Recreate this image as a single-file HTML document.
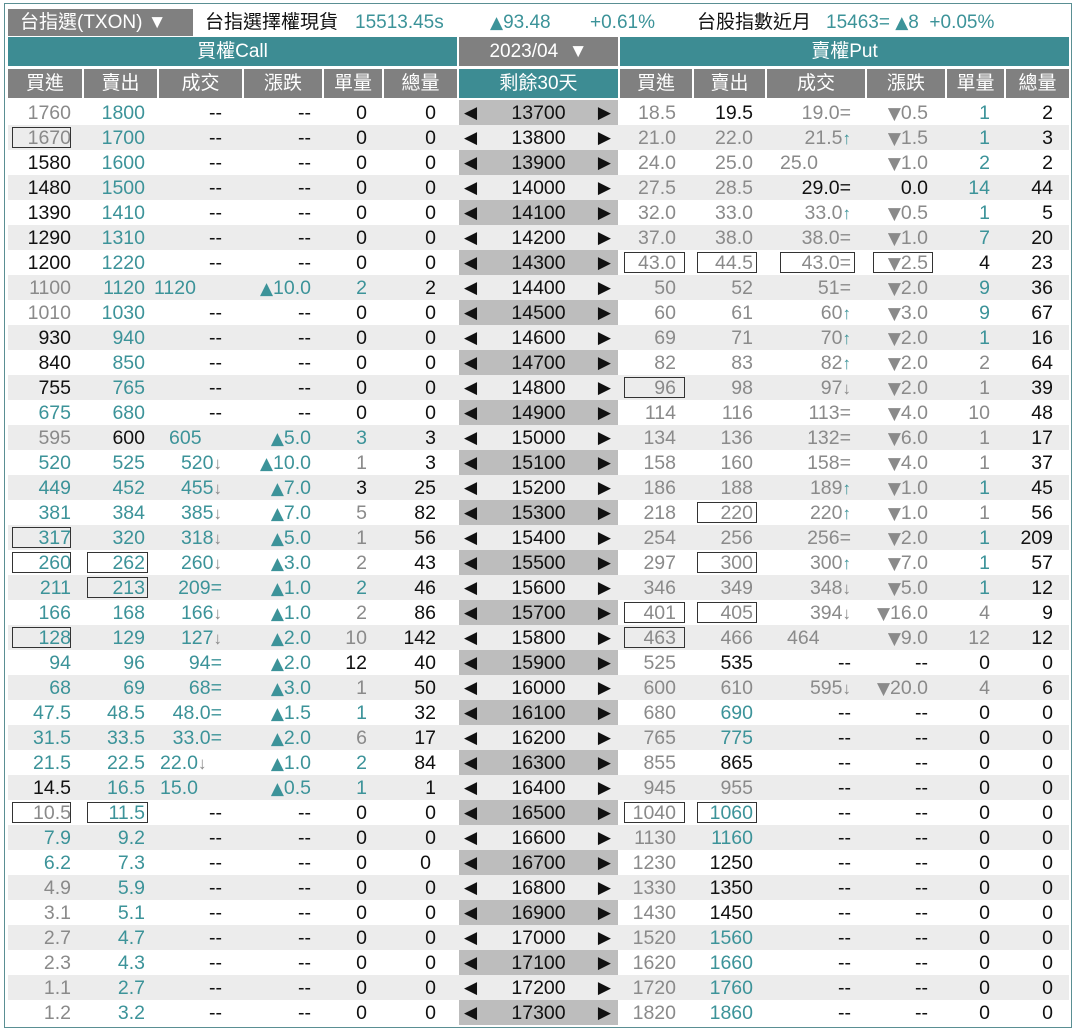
<!DOCTYPE html>
<html><head><meta charset="utf-8">
<style>
*{margin:0;padding:0;box-sizing:border-box}
body{width:1077px;height:1032px;background:#fff;position:relative;overflow:hidden;font-family:"Liberation Sans","Noto Sans CJK TC",sans-serif;font-size:19.5px;color:#111}
.frame{position:absolute;left:4px;top:3px;width:1068px;height:1025px;border:1px solid #5a8f93}
.tt{position:absolute;top:9px;height:27px;line-height:27px;white-space:nowrap;font-size:19px}
.hd{position:absolute;height:29px;line-height:29px;color:#fff;text-align:center;font-size:19px}
.ch{position:absolute;top:69px;height:29px;line-height:29px;background:#808080;color:#fff;text-align:center;font-size:19px}
.r{position:absolute;left:8px;width:1061px;height:25px;line-height:27px;margin-top:1px}
.r.o{background:#ececec}
.r span{position:absolute;top:0;height:25px;white-space:nowrap;text-align:right}
.c1{left:0;width:74px;padding-right:11px}
.c2{left:76px;width:73px;padding-right:12px}
.c3{left:151px;width:83px;padding-right:20px}
.c4{left:236px;width:78px;padding-right:11px}
.c5{left:316px;width:58px;padding-right:15px}
.c6{left:376px;width:73px;padding-right:21px}
.st{left:451px;width:159px;text-align:center!important;color:#111}
.st.d{background:#bdbdbd}
.st b{position:absolute;top:0;font-weight:normal;font-size:17px;font-family:"DejaVu Sans",sans-serif}
.st b.l{left:5px}.st b.rr{right:7px}
.p1{left:612px;width:72px;padding-right:16px}
.p2{left:686px;width:71px;padding-right:12px}
.p3{left:759px;width:98px;padding-right:14px}
.p4{left:859px;width:78px;padding-right:17px}
.p5{left:939px;width:57px;padding-right:14px}
.p6{left:998px;width:63px;padding-right:16px}
.L{text-align:left!important}
.t{color:#3c9399}.g{color:#8a8a8a}.n{color:#111}
.r span.bx{border:1px solid #333;top:2px;height:21px;padding:0}
.r span.u{position:static;color:#3c9399;font-size:17px;font-weight:bold}
.r span.dn{position:static;color:#8a8a8a;font-size:17px;font-weight:bold}
.tri{font-family:"DejaVu Sans",sans-serif;font-size:17px}
.r span.tri{position:static}
</style></head><body>
<div class="frame"></div>
<div class="tt" style="left:8px;width:185px;background:#808080;color:#fff;padding-left:12px">台指選(TXON) ▼</div>
<div class="tt" style="left:205px">台指選擇權現貨</div>
<div class="tt t" style="left:355px">15513.45s</div>
<div class="tt t" style="left:490px"><span class="tri">▲</span>93.48</div>
<div class="tt t" style="left:590px">+0.61%</div>
<div class="tt" style="left:697px">台股指數近月</div>
<div class="tt t" style="left:826px">15463= <span class="tri">▲</span>8&nbsp; +0.05%</div>

<div class="hd" style="top:37px;left:8px;width:449px;background:#3d8c93">買權Call</div>
<div class="hd" style="top:37px;left:459px;width:159px;background:#808080">2023/04 &nbsp;▼</div>
<div class="hd" style="top:37px;left:620px;width:449px;background:#3d8c93">賣權Put</div>

<div class="ch" style="left:8px;width:74px">買進</div>
<div class="ch" style="left:84px;width:73px">賣出</div>
<div class="ch" style="left:159px;width:83px">成交</div>
<div class="ch" style="left:244px;width:78px">漲跌</div>
<div class="ch" style="left:324px;width:58px">單量</div>
<div class="ch" style="left:384px;width:73px">總量</div>
<div class="ch" style="left:459px;width:159px;background:#3d8c93">剩餘30天</div>
<div class="ch" style="left:620px;width:72px">買進</div>
<div class="ch" style="left:694px;width:71px">賣出</div>
<div class="ch" style="left:767px;width:98px">成交</div>
<div class="ch" style="left:867px;width:78px">漲跌</div>
<div class="ch" style="left:947px;width:57px">單量</div>
<div class="ch" style="left:1006px;width:63px">總量</div>

<div class="r" style="top:99px"><span class="c1 g">1760</span><span class="c2 t">1800</span><span class="c3 n">--</span><span class="c4 n">--</span><span class="c5 n">0</span><span class="c6 n">0</span><span class="st d"><b class="l">◀</b>13700<b class="rr">▶</b></span><span class="p1 g">18.5</span><span class="p2 n">19.5</span><span class="p3 g">19.0=</span><span class="p4 g"><span class="tri">▼</span>0.5</span><span class="p5 t">1</span><span class="p6 n">2</span></div>
<div class="r o" style="top:124px"><span class="c1 g">1670</span><span class="bx" style="left:4px;width:59px"></span><span class="c2 t">1700</span><span class="c3 n">--</span><span class="c4 n">--</span><span class="c5 n">0</span><span class="c6 n">0</span><span class="st"><b class="l">◀</b>13800<b class="rr">▶</b></span><span class="p1 g">21.0</span><span class="p2 g">22.0</span><span class="p3 g">21.5<span class="u">↑</span></span><span class="p4 g"><span class="tri">▼</span>1.5</span><span class="p5 t">1</span><span class="p6 n">3</span></div>
<div class="r" style="top:149px"><span class="c1 n">1580</span><span class="c2 t">1600</span><span class="c3 n">--</span><span class="c4 n">--</span><span class="c5 n">0</span><span class="c6 n">0</span><span class="st d"><b class="l">◀</b>13900<b class="rr">▶</b></span><span class="p1 g">24.0</span><span class="p2 g">25.0</span><span class="p3 g L" style="padding-left:13px">25.0</span><span class="p4 g"><span class="tri">▼</span>1.0</span><span class="p5 t">2</span><span class="p6 n">2</span></div>
<div class="r o" style="top:174px"><span class="c1 n">1480</span><span class="c2 t">1500</span><span class="c3 n">--</span><span class="c4 n">--</span><span class="c5 n">0</span><span class="c6 n">0</span><span class="st"><b class="l">◀</b>14000<b class="rr">▶</b></span><span class="p1 g">27.5</span><span class="p2 g">28.5</span><span class="p3 n">29.0=</span><span class="p4 n">0.0</span><span class="p5 t">14</span><span class="p6 n">44</span></div>
<div class="r" style="top:199px"><span class="c1 n">1390</span><span class="c2 t">1410</span><span class="c3 n">--</span><span class="c4 n">--</span><span class="c5 n">0</span><span class="c6 n">0</span><span class="st d"><b class="l">◀</b>14100<b class="rr">▶</b></span><span class="p1 g">32.0</span><span class="p2 g">33.0</span><span class="p3 g">33.0<span class="u">↑</span></span><span class="p4 g"><span class="tri">▼</span>0.5</span><span class="p5 t">1</span><span class="p6 n">5</span></div>
<div class="r o" style="top:224px"><span class="c1 n">1290</span><span class="c2 t">1310</span><span class="c3 n">--</span><span class="c4 n">--</span><span class="c5 n">0</span><span class="c6 n">0</span><span class="st"><b class="l">◀</b>14200<b class="rr">▶</b></span><span class="p1 g">37.0</span><span class="p2 g">38.0</span><span class="p3 g">38.0=</span><span class="p4 g"><span class="tri">▼</span>1.0</span><span class="p5 t">7</span><span class="p6 n">20</span></div>
<div class="r" style="top:249px"><span class="c1 n">1200</span><span class="c2 t">1220</span><span class="c3 n">--</span><span class="c4 n">--</span><span class="c5 n">0</span><span class="c6 n">0</span><span class="st d"><b class="l">◀</b>14300<b class="rr">▶</b></span><span class="p1 g">43.0</span><span class="bx" style="left:616px;width:61px"></span><span class="p2 g">44.5</span><span class="bx" style="left:689px;width:60px"></span><span class="p3 g">43.0=</span><span class="bx" style="left:772px;width:75px"></span><span class="p4 g"><span class="tri">▼</span>2.5</span><span class="bx" style="left:865px;width:60px"></span><span class="p5 n">4</span><span class="p6 n">23</span></div>
<div class="r o" style="top:274px"><span class="c1 g">1100</span><span class="c2 t">1120</span><span class="c3 t L" style="left:146px">1120</span><span class="c4 t"><span class="tri">▲</span>10.0</span><span class="c5 t">2</span><span class="c6 n">2</span><span class="st"><b class="l">◀</b>14400<b class="rr">▶</b></span><span class="p1 g">50</span><span class="p2 g">52</span><span class="p3 g">51=</span><span class="p4 g"><span class="tri">▼</span>2.0</span><span class="p5 t">9</span><span class="p6 n">36</span></div>
<div class="r" style="top:299px"><span class="c1 g">1010</span><span class="c2 t">1030</span><span class="c3 n">--</span><span class="c4 n">--</span><span class="c5 n">0</span><span class="c6 n">0</span><span class="st d"><b class="l">◀</b>14500<b class="rr">▶</b></span><span class="p1 g">60</span><span class="p2 g">61</span><span class="p3 g">60<span class="u">↑</span></span><span class="p4 g"><span class="tri">▼</span>3.0</span><span class="p5 t">9</span><span class="p6 n">67</span></div>
<div class="r o" style="top:324px"><span class="c1 n">930</span><span class="c2 t">940</span><span class="c3 n">--</span><span class="c4 n">--</span><span class="c5 n">0</span><span class="c6 n">0</span><span class="st"><b class="l">◀</b>14600<b class="rr">▶</b></span><span class="p1 g">69</span><span class="p2 g">71</span><span class="p3 g">70<span class="u">↑</span></span><span class="p4 g"><span class="tri">▼</span>2.0</span><span class="p5 t">1</span><span class="p6 n">16</span></div>
<div class="r" style="top:349px"><span class="c1 n">840</span><span class="c2 t">850</span><span class="c3 n">--</span><span class="c4 n">--</span><span class="c5 n">0</span><span class="c6 n">0</span><span class="st d"><b class="l">◀</b>14700<b class="rr">▶</b></span><span class="p1 g">82</span><span class="p2 g">83</span><span class="p3 g">82<span class="u">↑</span></span><span class="p4 g"><span class="tri">▼</span>2.0</span><span class="p5 g">2</span><span class="p6 n">64</span></div>
<div class="r o" style="top:374px"><span class="c1 n">755</span><span class="c2 t">765</span><span class="c3 n">--</span><span class="c4 n">--</span><span class="c5 n">0</span><span class="c6 n">0</span><span class="st"><b class="l">◀</b>14800<b class="rr">▶</b></span><span class="p1 g">96</span><span class="bx" style="left:616px;width:61px"></span><span class="p2 g">98</span><span class="p3 g">97<span class="dn">↓</span></span><span class="p4 g"><span class="tri">▼</span>2.0</span><span class="p5 g">1</span><span class="p6 n">39</span></div>
<div class="r" style="top:399px"><span class="c1 t">675</span><span class="c2 t">680</span><span class="c3 n">--</span><span class="c4 n">--</span><span class="c5 n">0</span><span class="c6 n">0</span><span class="st d"><b class="l">◀</b>14900<b class="rr">▶</b></span><span class="p1 g">114</span><span class="p2 g">116</span><span class="p3 g">113=</span><span class="p4 g"><span class="tri">▼</span>4.0</span><span class="p5 g">10</span><span class="p6 n">48</span></div>
<div class="r o" style="top:424px"><span class="c1 g">595</span><span class="c2 n">600</span><span class="c3 t L" style="padding-left:10px">605</span><span class="c4 t"><span class="tri">▲</span>5.0</span><span class="c5 t">3</span><span class="c6 n">3</span><span class="st"><b class="l">◀</b>15000<b class="rr">▶</b></span><span class="p1 g">134</span><span class="p2 g">136</span><span class="p3 g">132=</span><span class="p4 g"><span class="tri">▼</span>6.0</span><span class="p5 g">1</span><span class="p6 n">17</span></div>
<div class="r" style="top:449px"><span class="c1 t">520</span><span class="c2 t">525</span><span class="c3 t">520<span class="dn">↓</span></span><span class="c4 t"><span class="tri">▲</span>10.0</span><span class="c5 g">1</span><span class="c6 n">3</span><span class="st d"><b class="l">◀</b>15100<b class="rr">▶</b></span><span class="p1 g">158</span><span class="p2 g">160</span><span class="p3 g">158=</span><span class="p4 g"><span class="tri">▼</span>4.0</span><span class="p5 g">1</span><span class="p6 n">37</span></div>
<div class="r o" style="top:474px"><span class="c1 t">449</span><span class="c2 t">452</span><span class="c3 t">455<span class="dn">↓</span></span><span class="c4 t"><span class="tri">▲</span>7.0</span><span class="c5 n">3</span><span class="c6 n">25</span><span class="st"><b class="l">◀</b>15200<b class="rr">▶</b></span><span class="p1 g">186</span><span class="p2 g">188</span><span class="p3 g">189<span class="u">↑</span></span><span class="p4 g"><span class="tri">▼</span>1.0</span><span class="p5 t">1</span><span class="p6 n">45</span></div>
<div class="r" style="top:499px"><span class="c1 t">381</span><span class="c2 t">384</span><span class="c3 t">385<span class="dn">↓</span></span><span class="c4 t"><span class="tri">▲</span>7.0</span><span class="c5 g">5</span><span class="c6 n">82</span><span class="st d"><b class="l">◀</b>15300<b class="rr">▶</b></span><span class="p1 g">218</span><span class="p2 g">220</span><span class="bx" style="left:689px;width:60px"></span><span class="p3 g">220<span class="u">↑</span></span><span class="p4 g"><span class="tri">▼</span>1.0</span><span class="p5 g">1</span><span class="p6 n">56</span></div>
<div class="r o" style="top:524px"><span class="c1 t">317</span><span class="bx" style="left:4px;width:59px"></span><span class="c2 t">320</span><span class="c3 t">318<span class="dn">↓</span></span><span class="c4 t"><span class="tri">▲</span>5.0</span><span class="c5 g">1</span><span class="c6 n">56</span><span class="st"><b class="l">◀</b>15400<b class="rr">▶</b></span><span class="p1 g">254</span><span class="p2 g">256</span><span class="p3 g">256=</span><span class="p4 g"><span class="tri">▼</span>2.0</span><span class="p5 t">1</span><span class="p6 n">209</span></div>
<div class="r" style="top:549px"><span class="c1 t">260</span><span class="bx" style="left:4px;width:59px"></span><span class="c2 t">262</span><span class="bx" style="left:79px;width:61px"></span><span class="c3 t">260<span class="dn">↓</span></span><span class="c4 t"><span class="tri">▲</span>3.0</span><span class="c5 g">2</span><span class="c6 n">43</span><span class="st d"><b class="l">◀</b>15500<b class="rr">▶</b></span><span class="p1 g">297</span><span class="p2 g">300</span><span class="bx" style="left:689px;width:60px"></span><span class="p3 g">300<span class="u">↑</span></span><span class="p4 g"><span class="tri">▼</span>7.0</span><span class="p5 t">1</span><span class="p6 n">57</span></div>
<div class="r o" style="top:574px"><span class="c1 t">211</span><span class="c2 t">213</span><span class="bx" style="left:79px;width:61px"></span><span class="c3 t">209=</span><span class="c4 t"><span class="tri">▲</span>1.0</span><span class="c5 t">2</span><span class="c6 n">46</span><span class="st"><b class="l">◀</b>15600<b class="rr">▶</b></span><span class="p1 g">346</span><span class="p2 g">349</span><span class="p3 g">348<span class="dn">↓</span></span><span class="p4 g"><span class="tri">▼</span>5.0</span><span class="p5 t">1</span><span class="p6 n">12</span></div>
<div class="r" style="top:599px"><span class="c1 t">166</span><span class="c2 t">168</span><span class="c3 t">166<span class="dn">↓</span></span><span class="c4 t"><span class="tri">▲</span>1.0</span><span class="c5 g">2</span><span class="c6 n">86</span><span class="st d"><b class="l">◀</b>15700<b class="rr">▶</b></span><span class="p1 g">401</span><span class="bx" style="left:616px;width:61px"></span><span class="p2 g">405</span><span class="bx" style="left:689px;width:60px"></span><span class="p3 g">394<span class="dn">↓</span></span><span class="p4 g"><span class="tri">▼</span>16.0</span><span class="p5 g">4</span><span class="p6 n">9</span></div>
<div class="r o" style="top:624px"><span class="c1 t">128</span><span class="bx" style="left:4px;width:59px"></span><span class="c2 t">129</span><span class="c3 t">127<span class="dn">↓</span></span><span class="c4 t"><span class="tri">▲</span>2.0</span><span class="c5 g">10</span><span class="c6 n">142</span><span class="st"><b class="l">◀</b>15800<b class="rr">▶</b></span><span class="p1 g">463</span><span class="bx" style="left:616px;width:61px"></span><span class="p2 g">466</span><span class="p3 g L" style="padding-left:20px">464</span><span class="p4 g"><span class="tri">▼</span>9.0</span><span class="p5 g">12</span><span class="p6 n">12</span></div>
<div class="r" style="top:649px"><span class="c1 t">94</span><span class="c2 t">96</span><span class="c3 t">94=</span><span class="c4 t"><span class="tri">▲</span>2.0</span><span class="c5 n">12</span><span class="c6 n">40</span><span class="st d"><b class="l">◀</b>15900<b class="rr">▶</b></span><span class="p1 g">525</span><span class="p2 n">535</span><span class="p3 n">--</span><span class="p4 n">--</span><span class="p5 n">0</span><span class="p6 n">0</span></div>
<div class="r o" style="top:674px"><span class="c1 t">68</span><span class="c2 t">69</span><span class="c3 t">68=</span><span class="c4 t"><span class="tri">▲</span>3.0</span><span class="c5 g">1</span><span class="c6 n">50</span><span class="st"><b class="l">◀</b>16000<b class="rr">▶</b></span><span class="p1 g">600</span><span class="p2 g">610</span><span class="p3 g">595<span class="dn">↓</span></span><span class="p4 g"><span class="tri">▼</span>20.0</span><span class="p5 g">4</span><span class="p6 n">6</span></div>
<div class="r" style="top:699px"><span class="c1 t">47.5</span><span class="c2 t">48.5</span><span class="c3 t">48.0=</span><span class="c4 t"><span class="tri">▲</span>1.5</span><span class="c5 t">1</span><span class="c6 n">32</span><span class="st d"><b class="l">◀</b>16100<b class="rr">▶</b></span><span class="p1 g">680</span><span class="p2 t">690</span><span class="p3 n">--</span><span class="p4 n">--</span><span class="p5 n">0</span><span class="p6 n">0</span></div>
<div class="r o" style="top:724px"><span class="c1 t">31.5</span><span class="c2 t">33.5</span><span class="c3 t">33.0=</span><span class="c4 t"><span class="tri">▲</span>2.0</span><span class="c5 g">6</span><span class="c6 n">17</span><span class="st"><b class="l">◀</b>16200<b class="rr">▶</b></span><span class="p1 g">765</span><span class="p2 t">775</span><span class="p3 n">--</span><span class="p4 n">--</span><span class="p5 n">0</span><span class="p6 n">0</span></div>
<div class="r" style="top:749px"><span class="c1 t">21.5</span><span class="c2 t">22.5</span><span class="c3 t L" style="padding-left:1px">22.0<span class="dn">↓</span></span><span class="c4 t"><span class="tri">▲</span>1.0</span><span class="c5 t">2</span><span class="c6 n">84</span><span class="st d"><b class="l">◀</b>16300<b class="rr">▶</b></span><span class="p1 g">855</span><span class="p2 n">865</span><span class="p3 n">--</span><span class="p4 n">--</span><span class="p5 n">0</span><span class="p6 n">0</span></div>
<div class="r o" style="top:774px"><span class="c1 n">14.5</span><span class="c2 t">16.5</span><span class="c3 t L" style="padding-left:1px">15.0</span><span class="c4 t"><span class="tri">▲</span>0.5</span><span class="c5 t">1</span><span class="c6 n">1</span><span class="st"><b class="l">◀</b>16400<b class="rr">▶</b></span><span class="p1 g">945</span><span class="p2 g">955</span><span class="p3 n">--</span><span class="p4 n">--</span><span class="p5 n">0</span><span class="p6 n">0</span></div>
<div class="r" style="top:799px"><span class="c1 g">10.5</span><span class="bx" style="left:4px;width:59px"></span><span class="c2 t">11.5</span><span class="bx" style="left:79px;width:61px"></span><span class="c3 n">--</span><span class="c4 n">--</span><span class="c5 n">0</span><span class="c6 n">0</span><span class="st d"><b class="l">◀</b>16500<b class="rr">▶</b></span><span class="p1 g">1040</span><span class="bx" style="left:616px;width:61px"></span><span class="p2 t">1060</span><span class="bx" style="left:689px;width:60px"></span><span class="p3 n">--</span><span class="p4 n">--</span><span class="p5 n">0</span><span class="p6 n">0</span></div>
<div class="r o" style="top:824px"><span class="c1 t">7.9</span><span class="c2 t">9.2</span><span class="c3 n">--</span><span class="c4 n">--</span><span class="c5 n">0</span><span class="c6 n">0</span><span class="st"><b class="l">◀</b>16600<b class="rr">▶</b></span><span class="p1 g">1130</span><span class="p2 t">1160</span><span class="p3 n">--</span><span class="p4 n">--</span><span class="p5 n">0</span><span class="p6 n">0</span></div>
<div class="r" style="top:849px"><span class="c1 t">6.2</span><span class="c2 t">7.3</span><span class="c3 n">--</span><span class="c4 n">--</span><span class="c5 n">0</span><span class="c6 n" style="padding-right:26px">0</span><span class="st d"><b class="l">◀</b>16700<b class="rr">▶</b></span><span class="p1 g">1230</span><span class="p2 n">1250</span><span class="p3 n">--</span><span class="p4 n">--</span><span class="p5 n">0</span><span class="p6 n">0</span></div>
<div class="r o" style="top:874px"><span class="c1 g">4.9</span><span class="c2 t">5.9</span><span class="c3 n">--</span><span class="c4 n">--</span><span class="c5 n">0</span><span class="c6 n">0</span><span class="st"><b class="l">◀</b>16800<b class="rr">▶</b></span><span class="p1 g">1330</span><span class="p2 n">1350</span><span class="p3 n">--</span><span class="p4 n">--</span><span class="p5 n">0</span><span class="p6 n">0</span></div>
<div class="r" style="top:899px"><span class="c1 g">3.1</span><span class="c2 t">5.1</span><span class="c3 n">--</span><span class="c4 n">--</span><span class="c5 n">0</span><span class="c6 n">0</span><span class="st d"><b class="l">◀</b>16900<b class="rr">▶</b></span><span class="p1 g">1430</span><span class="p2 n">1450</span><span class="p3 n">--</span><span class="p4 n">--</span><span class="p5 n">0</span><span class="p6 n">0</span></div>
<div class="r o" style="top:924px"><span class="c1 g">2.7</span><span class="c2 t">4.7</span><span class="c3 n">--</span><span class="c4 n">--</span><span class="c5 n">0</span><span class="c6 n">0</span><span class="st"><b class="l">◀</b>17000<b class="rr">▶</b></span><span class="p1 g">1520</span><span class="p2 t">1560</span><span class="p3 n">--</span><span class="p4 n">--</span><span class="p5 n">0</span><span class="p6 n">0</span></div>
<div class="r" style="top:949px"><span class="c1 g">2.3</span><span class="c2 t">4.3</span><span class="c3 n">--</span><span class="c4 n">--</span><span class="c5 n">0</span><span class="c6 n">0</span><span class="st d"><b class="l">◀</b>17100<b class="rr">▶</b></span><span class="p1 g">1620</span><span class="p2 t">1660</span><span class="p3 n">--</span><span class="p4 n">--</span><span class="p5 n">0</span><span class="p6 n">0</span></div>
<div class="r o" style="top:974px"><span class="c1 g">1.1</span><span class="c2 t">2.7</span><span class="c3 n">--</span><span class="c4 n">--</span><span class="c5 n">0</span><span class="c6 n">0</span><span class="st"><b class="l">◀</b>17200<b class="rr">▶</b></span><span class="p1 g">1720</span><span class="p2 t">1760</span><span class="p3 n">--</span><span class="p4 n">--</span><span class="p5 n">0</span><span class="p6 n">0</span></div>
<div class="r" style="top:999px"><span class="c1 g">1.2</span><span class="c2 t">3.2</span><span class="c3 n">--</span><span class="c4 n">--</span><span class="c5 n">0</span><span class="c6 n">0</span><span class="st d"><b class="l">◀</b>17300<b class="rr">▶</b></span><span class="p1 g">1820</span><span class="p2 t">1860</span><span class="p3 n">--</span><span class="p4 n">--</span><span class="p5 n">0</span><span class="p6 n">0</span></div>
</body></html>
